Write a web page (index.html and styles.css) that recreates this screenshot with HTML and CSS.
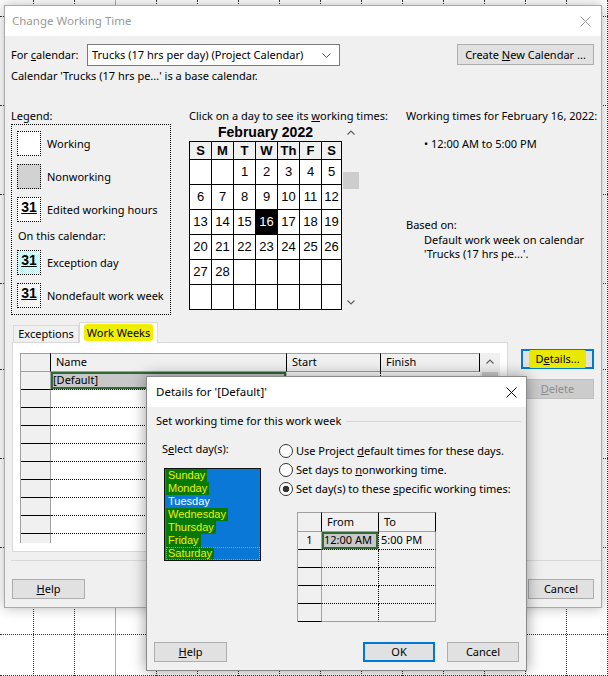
FILE: index.html
```html
<!DOCTYPE html>
<html lang="en">
<head>
<meta charset="utf-8">
<title>Change Working Time</title>
<link rel="stylesheet" href="styles.css">
</head>
<body>
<div class="backdrop">
  <div class="vlines">
    <div class="v first"></div><div class="v"></div><div class="v green"></div><div class="v"></div><div class="v"></div>
    <div class="v"></div><div class="v"></div><div class="v"></div><div class="v"></div><div class="v"></div>
    <div class="v"></div><div class="v"></div><div class="v"></div><div class="v"></div><div class="v"></div>
  </div>
  <div class="hlines">
    <div class="h h0"></div><div class="h"></div><div class="h"></div><div class="h"></div><div class="h h4"></div>
    <div class="h"></div><div class="h"></div><div class="h h7"></div><div class="h h8"></div>
  </div>
</div>

<section class="win main">
  <header class="titlebar">
    <span class="title">Change Working Time</span>
    <svg class="close" viewBox="0 0 11 11"><path d="M0.5 0.5L10.5 10.5M10.5 0.5L0.5 10.5"/></svg>
  </header>
  <div class="main-body">
    <div class="cal-row">
      <span class="lbl-cal">For <u>c</u>alendar:</span>
      <div class="select">
        <span>Trucks (17 hrs per day) (Project Calendar)</span>
        <svg class="chev" viewBox="0 0 9 5"><path d="M0.5 0.5L4.5 4.5L8.5 0.5"/></svg>
      </div>
      <button class="btn btn-new"><span>Create <u>N</u>ew Calendar ...</span></button>
    </div>
    <p class="base-note">Calendar 'Trucks (17 hrs pe...' is a base calendar.</p>

    <div class="columns">
      <div class="legend">
        <div class="cap">Legend:</div>
        <div class="legend-box">
          <div class="li"><span class="sw working"></span><span>Working</span></div>
          <div class="li"><span class="sw nonworking"></span><span>Nonworking</span></div>
          <div class="li"><span class="sw edited"><b>31</b></span><span>Edited working hours</span></div>
          <div class="li-cap">On this calendar:</div>
          <div class="li"><span class="sw exception"><b>31</b></span><span>Exception day</span></div>
          <div class="li"><span class="sw nondefault"><b>31</b></span><span>Nondefault work week</span></div>
        </div>
      </div>

      <div class="calendar">
        <div class="cap">Click on a day to see its <u>w</u>orking times:</div>
        <div class="cal-wrap">
          <div class="month">
            <div class="month-title">February 2022</div>
            <div class="days">
              <div class="dh">S</div><div class="dh">M</div><div class="dh">T</div><div class="dh">W</div><div class="dh">Th</div><div class="dh">F</div><div class="dh">S</div>
              <div class="d"></div><div class="d"></div><div class="d">1</div><div class="d">2</div><div class="d">3</div><div class="d">4</div><div class="d">5</div>
              <div class="d">6</div><div class="d">7</div><div class="d">8</div><div class="d">9</div><div class="d">10</div><div class="d">11</div><div class="d">12</div>
              <div class="d">13</div><div class="d">14</div><div class="d">15</div><div class="d today">16</div><div class="d">17</div><div class="d">18</div><div class="d">19</div>
              <div class="d">20</div><div class="d">21</div><div class="d">22</div><div class="d">23</div><div class="d">24</div><div class="d">25</div><div class="d">26</div>
              <div class="d">27</div><div class="d">28</div><div class="d"></div><div class="d"></div><div class="d"></div><div class="d"></div><div class="d"></div>
              <div class="d"></div><div class="d"></div><div class="d"></div><div class="d"></div><div class="d"></div><div class="d"></div><div class="d"></div>
            </div>
          </div>
          <div class="cal-scroll">
            <div class="arrow"><svg viewBox="0 0 8 5"><path d="M0.5 4.5L4 1L7.5 4.5"/></svg></div>
            <div class="thumb"></div>
            <div class="arrow down"><svg viewBox="0 0 8 5"><path d="M0.5 0.5L4 4L7.5 0.5"/></svg></div>
          </div>
        </div>
      </div>

      <div class="times">
        <div class="cap">Working times for February 16, 2022:</div>
        <div class="bullet">&bull; 12:00 AM to 5:00 PM</div>
        <div class="based">Based on:</div>
        <div class="based-text">Default work week on calendar<br>'Trucks (17 hrs pe...'.</div>
      </div>
    </div>

    <div class="lower">
      <div class="tabs-area">
        <div class="tabstrip">
          <div class="tab">Exceptions</div>
          <div class="tab active"><span class="hl">Work Weeks</span></div>
        </div>
        <div class="panel">
          <div class="table-wrap">
            <div class="tbl">
              <div class="tr hd"><div class="c rh"></div><div class="c name">Name</div><div class="c start">Start</div><div class="c finish">Finish</div></div>
              <div class="tr"><div class="c rh"></div><div class="c name sel">[Default]</div><div class="c start"></div><div class="c finish"></div></div>
              <div class="tr"><div class="c rh"></div><div class="c name"></div><div class="c start"></div><div class="c finish"></div></div>
              <div class="tr"><div class="c rh"></div><div class="c name"></div><div class="c start"></div><div class="c finish"></div></div>
              <div class="tr"><div class="c rh"></div><div class="c name"></div><div class="c start"></div><div class="c finish"></div></div>
              <div class="tr"><div class="c rh"></div><div class="c name"></div><div class="c start"></div><div class="c finish"></div></div>
              <div class="tr"><div class="c rh"></div><div class="c name"></div><div class="c start"></div><div class="c finish"></div></div>
              <div class="tr"><div class="c rh"></div><div class="c name"></div><div class="c start"></div><div class="c finish"></div></div>
              <div class="tr"><div class="c rh"></div><div class="c name"></div><div class="c start"></div><div class="c finish"></div></div>
              <div class="tr"><div class="c rh"></div><div class="c name"></div><div class="c start"></div><div class="c finish"></div></div>
              <div class="tr"><div class="c rh"></div><div class="c name"></div><div class="c start"></div><div class="c finish"></div></div>
            </div>
            <div class="tscroll">
              <div class="arrow"><svg viewBox="0 0 8 5"><path d="M0.5 4.5L4 1L7.5 4.5"/></svg></div>
              <div class="tthumb"></div>
            </div>
          </div>
        </div>
      </div>
      <div class="side-btns">
        <button class="btn focus"><span class="hl2">D<u>e</u>tails...</span></button>
        <button class="btn disabled"><span><u>D</u>elete</span></button>
      </div>
    </div>
    <div class="sep"></div>
    <div class="footer">
      <button class="btn help"><span><u>H</u>elp</span></button>
      <button class="btn cancel"><span>Cancel</span></button>
    </div>
  </div>
</section>

<section class="win details">
  <header class="titlebar">
    <span class="title">Details for '[Default]'</span>
    <svg class="close" viewBox="0 0 11 11"><path d="M0.5 0.5L10.5 10.5M10.5 0.5L0.5 10.5"/></svg>
  </header>
  <div class="d-body">
    <div class="groupline">Set working time for this work week</div>
    <div class="d-main">
      <div class="d-left">
        <div class="cap">S<u>e</u>lect day(s):</div>
        <div class="listbox">
          <div class="item"><span class="g">Sunday</span></div>
          <div class="item mk"><span class="g">Monday</span></div>
          <div class="item"><span class="w">Tuesday</span></div>
          <div class="item mk"><span class="g">Wednesday</span></div>
          <div class="item mk"><span class="g">Thursday</span></div>
          <div class="item"><span class="g">Friday</span></div>
          <div class="item mk focus-item"><span class="g">Saturday</span></div>
        </div>
      </div>
      <div class="d-right">
        <div class="radio"><span class="rb"></span><span>Use Project <u>d</u>efault times for these days.</span></div>
        <div class="radio"><span class="rb"></span><span>Set days to <u>n</u>onworking time.</span></div>
        <div class="radio"><span class="rb on"></span><span>Set day(s) to these <u>s</u>pecific working times:</span></div>
        <div class="stbl">
          <div class="sr shd"><div class="sc srh"></div><div class="sc sfrom">From</div><div class="sc sto">To</div></div>
          <div class="sr"><div class="sc srh">1</div><div class="sc sfrom ssel">12:00 AM</div><div class="sc sto">5:00 PM</div></div>
          <div class="sr"><div class="sc srh"></div><div class="sc sfrom"></div><div class="sc sto"></div></div>
          <div class="sr"><div class="sc srh"></div><div class="sc sfrom"></div><div class="sc sto"></div></div>
          <div class="sr"><div class="sc srh"></div><div class="sc sfrom"></div><div class="sc sto"></div></div>
          <div class="sr last"><div class="sc srh"></div><div class="sc sfrom"></div><div class="sc sto"></div></div>
        </div>
      </div>
    </div>
    <div class="d-footer">
      <button class="btn dhelp"><span><u>H</u>elp</span></button>
      <button class="btn focus ok"><span>OK</span></button>
      <button class="btn dcancel"><span>Cancel</span></button>
    </div>
  </div>
</section>
</body>
</html>
```

FILE: styles.css
```css
* { box-sizing: border-box; margin: 0; padding: 0; }
html, body { width: 608px; height: 676px; overflow: hidden; }
body {
  position: relative;
  background: #fff;
  font-family: "Noto Sans", "Liberation Sans", sans-serif;
  font-size: 11px;
  line-height: 16px;
  color: #000;
}
u { text-decoration: underline; text-underline-offset: 1px; }
button { font: inherit; color: inherit; cursor: default; }

/* background canvas */
.backdrop { position: absolute; inset: 0; }
.vlines { position: absolute; inset: 0; display: flex; }
.v { flex: none; width: 41px; border-right: 1px dotted #333; }
.v.first { width: 34px; }
.v.green { border-right: 1px solid #8fc28f; }
.hlines { position: absolute; inset: 0; display: flex; flex-direction: column; }
.h { flex: none; height: 89px; border-bottom: 1px dotted #333; }
.h.h0 { height: 17px; }
.h.h4 { height: 86px; }
.h.h7 { height: 87px; }
.h.h8 { height: 41px; }

/* windows */
.win { position: absolute; background: #f0f0f0; display: flex; flex-direction: column; }
.main {
  left: 4px; top: 5px; width: 598px; height: 603px;
  border: 1px solid #aaa;
  box-shadow: 0 0 12px rgba(0,0,0,0.28);
}
.details {
  left: 146px; top: 376px; width: 381px; height: 295px;
  border: 1px solid #8a8a8a;
  box-shadow: 0 0 14px rgba(0,0,0,0.4);
}
.titlebar {
  flex: none; height: 30px; background: #fff;
  display: flex; align-items: center; justify-content: space-between;
  font-size: 11.5px;
}
.main .titlebar { padding: 0 10px 0 7px; color: #9a9a9a; }
.details .titlebar { padding: 0 9px 0 9px; color: #000; }
.close { width: 11px; height: 11px; fill: none; stroke: currentColor; stroke-width: 1; }

/* buttons */
.btn {
  height: 20px; background: #e1e1e1; border: 1px solid #adadad;
  display: flex; align-items: center; justify-content: center;
  line-height: 16px; padding: 0; white-space: nowrap;
}
.btn.focus { border: 2px solid #0078d7; }
.btn.disabled { background: #cccccc; border-color: #bfbfbf; color: #8e8e8e; }

/* main body */
.main-body { flex: 1; display: flex; flex-direction: column; padding: 0 7px 0 6px; }
.cal-row { margin-top: 8px; display: flex; align-items: flex-start; height: 22px; }
.lbl-cal { width: 76px; line-height: 22px; }
.select {
  width: 253px; height: 22px; background: #fff; border: 1px solid #7a7a7a;
  display: flex; align-items: center; justify-content: space-between;
  padding: 0 8px 0 4px;
}
.chev { width: 9px; height: 5px; fill: none; stroke: #555; stroke-width: 1; }
.btn-new { margin-left: auto; width: 137px; height: 21px; }
.base-note { margin-top: 2px; line-height: 16px; }

.columns { margin-top: 24px; display: flex; align-items: flex-start; }
.cap { height: 16px; line-height: 16px; white-space: nowrap; }

/* legend */
.legend { width: 160px; flex: none; }
.legend-box {
  height: 191px; border: 1px dotted #000;
  padding: 6px 0 0 5px;
  display: flex; flex-direction: column; gap: 8px;
}
.li { display: flex; align-items: center; gap: 6px; height: 25px; }
.li-cap { height: 12px; line-height: 12px; margin-left: 1px; }
.sw {
  flex: none; width: 24px; height: 25px; border: 1px dotted #000;
  display: flex; justify-content: center; padding-top: 2px;
  font-family: "Liberation Sans", Arial, sans-serif; font-size: 14px; line-height: 14px;
}
.sw b { text-decoration: underline; text-underline-offset: 1px; }
.working { background: #fff; }
.nonworking { background: #d2d2d2; }
.edited { background: #fff; }
.exception { background: repeating-conic-gradient(#bfeeee 0 25%, #ffffff 0 50%) 0 0 / 2px 2px; }
.nondefault { background: repeating-conic-gradient(#fff3a8 0 25%, #ffffff 0 50%) 0 0 / 2px 2px; }

/* calendar */
.calendar { width: 170px; flex: none; margin-left: 18px; }
.cal-wrap { display: flex; }
.month { width: 153px; flex: none; }
.month-title {
  height: 17px; line-height: 17px; text-align: center;
  font-family: "Liberation Sans", Arial, sans-serif; font-weight: bold; font-size: 14px;
}
.days {
  display: grid;
  grid-template-columns: repeat(6, 21px) 19px;
  grid-template-rows: 17px repeat(6, 24px);
  gap: 1px; padding: 1px; background: #000;
  font-family: "Liberation Sans", Arial, sans-serif; font-size: 13px;
}
.dh {
  background: #f0f0f0; font-weight: bold;
  display: flex; align-items: center; justify-content: center;
}
.d { background: #fff; display: flex; align-items: center; justify-content: center; }
.d.today { background: #000; color: #fff; }
.cal-scroll { width: 16px; margin-left: 1px; height: 186px; display: flex; flex-direction: column; }
.arrow { height: 16px; display: flex; align-items: center; justify-content: center; }
.arrow svg { width: 8px; height: 5px; fill: none; stroke: #606060; stroke-width: 1.2; }
.thumb { margin-top: 32px; height: 17px; background: #cdcdcd; }
.arrow.down { margin-top: auto; }

/* times */
.times { margin-left: 47px; }
.bullet { margin-top: 12px; padding-left: 18px; line-height: 16px; }
.based { margin-top: 65px; line-height: 16px; }
.based-text { padding-left: 18px; line-height: 14px; }

/* tabs */
.lower { margin-top: 7px; margin-left: 1px; display: flex; align-items: flex-start; }
.tabs-area { width: 496px; flex: none; }
.tabstrip { display: flex; align-items: flex-end; height: 20px; padding-left: 1px; }
.tab {
  height: 17px; line-height: 15px; text-align: center;
  border: 1px solid #d9d9d9; border-bottom: none; background: #f0f0f0;
}
.tab:first-child { width: 66px; }
.tab.active {
  width: 79px; height: 21px; background: #fff; margin-bottom: -1px;
  position: relative; z-index: 1; padding-top: 2px;
}
.hl { background: #f0ef00; padding: 1px 3px; border-radius: 3px; }
.panel {
  height: 210px; background: #fff; border: 1px solid #d9d9d9;
  padding: 10px 0 0 7px;
}
.table-wrap { display: flex; height: 190px; }
.tbl { width: 460px; height: 190px; overflow: hidden; border-left: 1px solid #a0a0a0; }
.tr { display: flex; height: 18px; }
.c { flex: none; height: 18px; border-right: 1px dotted #000; border-bottom: 1px dotted #000; padding-left: 2px; line-height: 16px; white-space: nowrap; }
.c.rh { width: 30px; background: #f0f0f0; border-right: 1px solid #a0a0a0; border-bottom: 1px solid #000; }
.c.name { width: 236px; }
.c.start { width: 94px; }
.c.finish { width: 99px; border-right: none; }
.tr.hd { height: 19px; }
.tr.hd .c {
  height: 19px; background: #f0f0f0; border-top: 1px solid #a0a0a0;
  border-bottom: 1px solid #a0a0a0; border-right: 1px solid #000;
  padding-left: 5px; line-height: 16px;
}
.tr.hd .c.rh { border-right: 1px solid #000; }
.c.sel { background: #c8c8c8; box-shadow: inset 0 0 0 2px #2f6b34; border-right-color: transparent; }
.tscroll { width: 20px; background: #f0f0f0; display: flex; flex-direction: column; }
.tscroll .arrow { height: 17px; }
.tthumb { height: 60px; margin: 2px 2px 0; background: #cdcdcd; }

.side-btns { margin-left: 13px; margin-top: 27px; width: 73px; display: flex; flex-direction: column; gap: 10px; }
.side-btns .btn { width: 73px; }
.hl2 { background: #e9e900; padding: 1px 6px; border-radius: 2px; }

.sep { margin-top: 8px; margin-right: -7px; height: 1px; background: #d8d8d8; }
.footer { margin-top: 18px; padding-left: 1px; display: flex; justify-content: space-between; }
.help { width: 73px; }
.cancel { width: 66px; }

/* details dialog */
.d-body { flex: 1; display: flex; flex-direction: column; padding: 0 5px 0 9px; }
.groupline { margin-top: 6px; display: flex; align-items: center; gap: 5px; line-height: 16px; white-space: nowrap; }
.groupline::after { content: ""; flex: 1; height: 1px; background: #d5d5d5; }
.d-main { margin-top: 12px; display: flex; }
.d-left { width: 123px; flex: none; padding-left: 6px; }
.listbox {
  margin: 11px 0 0 2px; width: 97px; height: 93px;
  background: #0a78d7; border: 1px solid #111; padding-left: 1px;
  font-family: "Liberation Sans", Arial, sans-serif; font-size: 11px;
}
.item { height: 13px; line-height: 13px; white-space: nowrap; display: flex; }
.item span { display: block; height: 13px; line-height: 13px; padding: 0 2px; }
.item .g { background: #067a06; color: #eef000; }
.item .w { color: #fff; }
.item.mk { box-shadow: inset 2px 0 0 #f0f000; }
.focus-item { outline: 1px dotted #e08a30; outline-offset: -1px; }
.d-right { flex: 1; display: flex; flex-direction: column; }
.radio { height: 19px; display: flex; align-items: center; gap: 3px; white-space: nowrap; }
.rb { flex: none; width: 14px; height: 14px; border: 1px solid #333; border-radius: 50%; background: #fff; }
.rb.on { background: radial-gradient(circle, #333 0 3px, #fff 3.6px); }
.stbl { margin: 14px 0 0 18px; width: 139px; border-left: 1px solid #a0a0a0; }
.sr { display: flex; height: 18px; }
.sc { flex: none; height: 18px; line-height: 16px; border-bottom: 1px dotted #000; white-space: nowrap; }
.srh { width: 24px; background: #f0f0f0; border-right: 1px solid #a0a0a0; border-bottom: 1px solid #000; text-align: center; }
.sfrom { width: 57px; border-right: 1px dotted #000; padding-left: 2px; }
.sto { width: 57px; border-right: 1px solid #a0a0a0; padding-left: 2px; }
.sr.shd { height: 20px; }
.sr.shd .sc {
  height: 20px; background: #f0f0f0; border-top: 1px solid #a0a0a0;
  border-bottom: 1px solid #a0a0a0; border-right: 1px solid #000;
  padding-left: 5px; line-height: 18px;
}
.sr.shd .srh { border-right: 1px solid #000; }
.ssel { background: #c8c8c8; box-shadow: inset 0 0 0 2px #2f6b34; }
.sr.last .sfrom, .sr.last .sto { border-bottom: 1px solid #a0a0a0; }
.d-footer { margin-top: 20px; margin-left: -2px; margin-right: 2px; display: flex; gap: 12px; }
.dhelp { width: 73px; }
.ok { width: 72px; margin-left: auto; }
.dcancel { width: 72px; }
```
